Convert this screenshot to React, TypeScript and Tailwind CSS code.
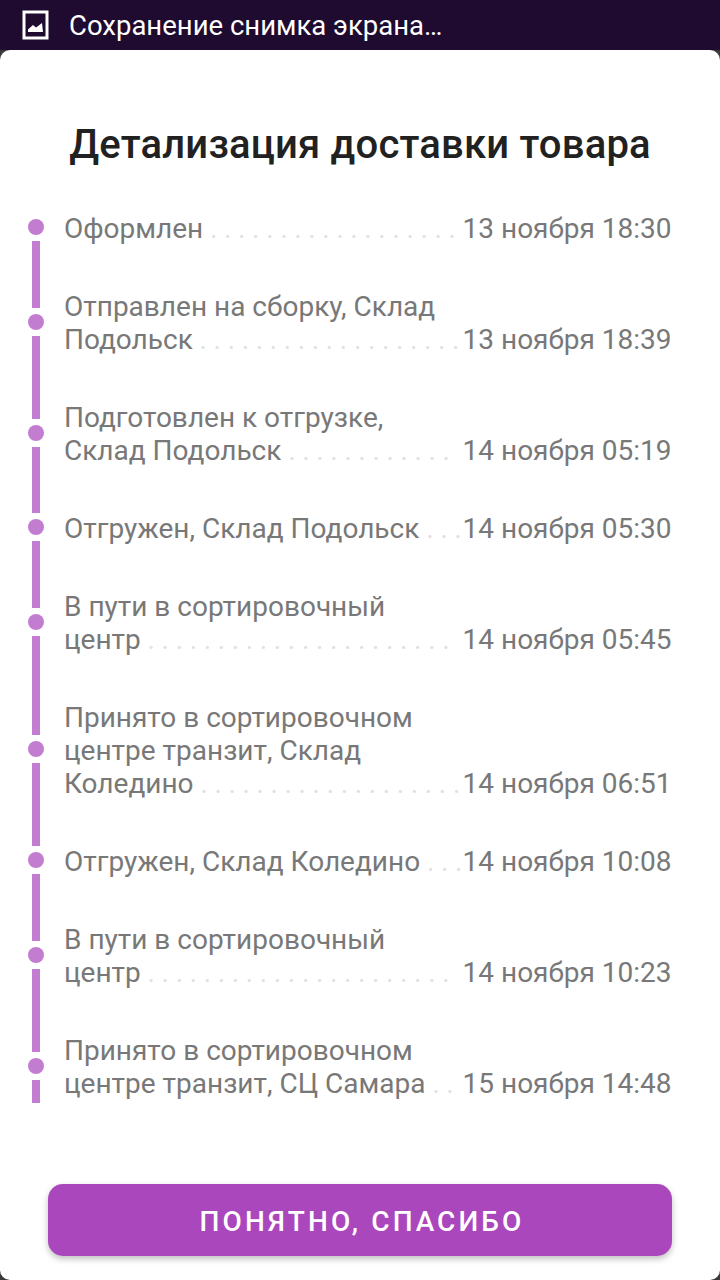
const steps = [
  { lines: ['Оформлен'], dots: 18, date: '13 ноября 18:30' },
  { lines: ['Отправлен на сборку, Склад', 'Подольск'], dots: 19, date: '13 ноября 18:39' },
  { lines: ['Подготовлен к отгрузке,', 'Склад Подольск'], dots: 12, date: '14 ноября 05:19' },
  { lines: ['Отгружен, Склад Подольск'], dots: 3, date: '14 ноября 05:30' },
  { lines: ['В пути в сортировочный', 'центр'], dots: 22, date: '14 ноября 05:45' },
  { lines: ['Принято в сортировочном', 'центре транзит, Склад', 'Коледино'], dots: 19, date: '14 ноября 06:51' },
  { lines: ['Отгружен, Склад Коледино'], dots: 3, date: '14 ноября 10:08' },
  { lines: ['В пути в сортировочный', 'центр'], dots: 22, date: '14 ноября 10:23' },
  { lines: ['Принято в сортировочном', 'центре транзит, СЦ Самара'], dots: 2, date: '15 ноября 14:48' },
];

// bar under each dot
const bars = ['h-[67px]', 'h-[83px]', 'h-[66px]', 'h-[67px]', 'h-[99px]', 'h-[83px]', 'h-[67px]', 'h-[83px]', 'h-[23px]'];

function Timeline() {
  return (
    <div className="flex w-4 shrink-0 flex-col items-center pt-[7px]">
      {bars.map((bar, i) => (
        <div key={i} className="flex flex-col items-center">
          <div className="h-4 w-4 rounded-full bg-[#c27dd1]" />
          <div className={`my-[6px] w-2 bg-[#c27dd1] ${bar}`} />
        </div>
      ))}
    </div>
  );
}

function Step({ lines, dots, date }: { lines: string[]; dots: number; date: string }) {
  const last = lines[lines.length - 1];
  return (
    <div>
      {lines.slice(0, -1).map((line) => (
        <div key={line} className="whitespace-nowrap">{line}</div>
      ))}
      <div className="flex">
        <span className="whitespace-nowrap">{last}</span>
        <span className="min-w-0 flex-1 tracking-[-0.15px] whitespace-pre text-[#e0e0e0]">{' .'.repeat(dots)}</span>
        <span className="w-[210px] shrink-0 pr-[0.5px] text-right whitespace-nowrap">{date}</span>
      </div>
    </div>
  );
}

export default function App() {
  return (
    <div className="flex h-[1280px] w-[720px] flex-col overflow-hidden bg-[#3a3a3a] font-['Roboto',sans-serif]">
      <div className="flex h-[50px] shrink-0 items-center gap-[20px] bg-[#1f0a30] pl-[22px] text-white">
        <svg width="27" height="30" viewBox="0 0 27 30" fill="none" className="mt-[-1px]">
          <rect x="2" y="2" width="23" height="26" stroke="white" strokeWidth="3" />
          <path d="M6 22 L6 19.5 L11 15 L14 17.5 L20 13 L21 22 Z" fill="white" />
        </svg>
        <span className="text-[27.5px] leading-[33px]">Сохранение снимка экрана…</span>
      </div>

      <div className="flex flex-1 flex-col rounded-[10px] bg-white">
        <h1 className="pt-[71px] text-center text-[40px] leading-[47px] font-medium tracking-[0.2px] text-[#212121]">
          Детализация доставки товара
        </h1>
        <div className="mt-[44px] flex gap-[20px] pr-[48px] pl-[28px]">
          <Timeline />
          <div className="flex min-w-0 flex-1 flex-col gap-[45px] text-[28px] leading-[33px] text-[#787878]">
            {steps.map((step, i) => (
              <Step key={i} lines={step.lines} dots={step.dots} date={step.date} />
            ))}
          </div>
        </div>
        <button className="mx-[48px] mt-[75px] h-[72px] shrink-0 rounded-[15px] bg-[#ab47bc] pt-[3px] pl-[4px] text-[28px] font-medium tracking-[3.1px] text-white shadow-[0_3px_6px_rgba(0,0,0,0.25)]">
          ПОНЯТНО, СПАСИБО
        </button>
      </div>
    </div>
  );
}
